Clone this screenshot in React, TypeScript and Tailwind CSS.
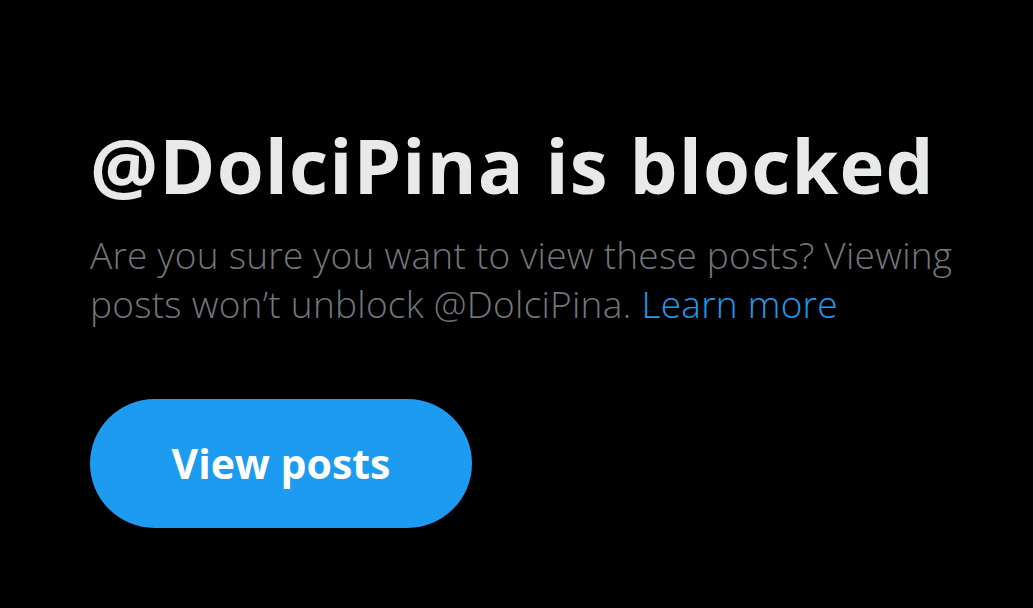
export default function App() {
  return (
    <div className="min-h-screen w-full bg-black">
      <div className="flex flex-col items-start pl-[90px] pr-[60px] pt-[121px] font-['Segoe_UI','Open_Sans',sans-serif]">
        <h1 className="text-[76px] font-bold leading-[88px] tracking-[1.1px] text-[#e7e9ea]">@DolciPina is blocked</h1>
        <p className="mt-[21px] text-[37px] font-light leading-[49px] tracking-[0.25px] text-[#71767b]">
          Are you sure you want to view these posts? Viewing posts won’t unblock @DolciPina.{' '}
          <a href="#" className="text-[#1d9bf0]">Learn more</a>
        </p>
        <button className="mt-[71px] flex h-[129px] w-[382px] items-center justify-center rounded-full bg-[#1d9bf0] text-[41px] font-bold text-white">
          View posts
        </button>
      </div>
    </div>
  )
}
